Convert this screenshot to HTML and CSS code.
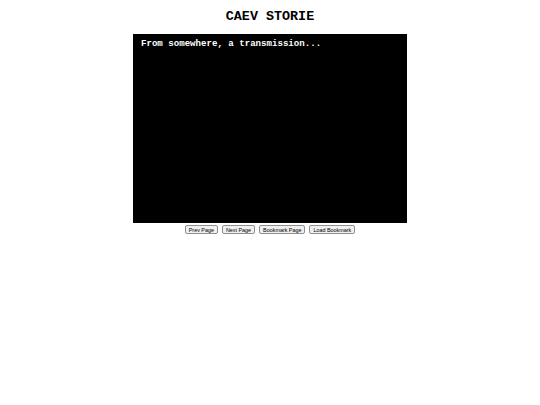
FILE: index.html
```html
<!DOCTYPE html>
<html>
<head>
<meta charset="utf-8">
<link rel="stylesheet" href="styles.css">
</head>
<body>
<div class="page">
  <h1 class="title">CAEV STORIE</h1>
  <div class="screen">
    <p class="line">From somewhere, a transmission...</p>
  </div>
  <div class="controls">
    <button class="btn">Prev Page</button>
    <button class="btn">Next Page</button>
    <button class="btn">Bookmark Page</button>
    <button class="btn">Load Bookmark</button>
  </div>
</div>
</body>
</html>
```
FILE: styles.css
```css
html, body {
  margin: 0;
  padding: 0;
  background: #ffffff;
}
.page {
  display: flex;
  flex-direction: column;
  align-items: center;
  padding-top: 9px;
}
.title {
  margin: 0;
  font-family: "Liberation Mono", "Courier New", monospace;
  font-weight: bold;
  font-size: 13.4px;
  line-height: 15px;
  color: #000;
}
.screen {
  margin-top: 10px;
  width: 274px;
  height: 189px;
  background: #000;
  box-sizing: border-box;
  padding: 4px 8px;
}
.line {
  margin: 0;
  color: #fff;
  font-family: "Liberation Mono", "Courier New", monospace;
  font-weight: bold;
  font-size: 9.1px;
  line-height: 11px;
}
.controls {
  margin-top: 2px;
  display: flex;
  gap: 4px;
}
.btn {
  font-family: "Liberation Sans", Arial, sans-serif;
  font-size: 5.4px;
  line-height: 6px;
  height: 9px;
  padding: 0 3px;
  border: 1px solid #8f8f8f;
  border-radius: 2px;
  background: #efefef;
  color: #000;
}
```
